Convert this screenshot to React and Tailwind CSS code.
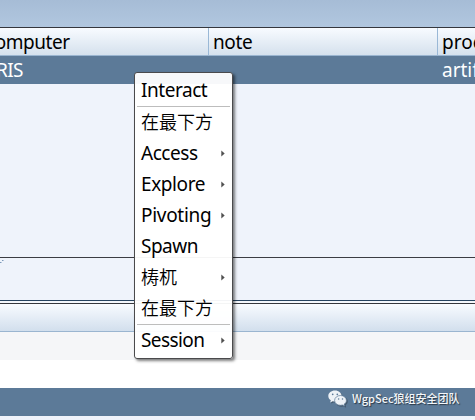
const latin = "font-['Noto_Sans','Noto_Sans_CJK_SC',sans-serif]";
const cjk = "font-['Noto_Sans_CJK_SC',sans-serif]";

const groups = [
  [{ label: 'Interact', tracking: 'tracking-[-0.45px]' }],
  [
    { label: '在最下方', cjk: true },
    { label: 'Access', arrow: true, tracking: 'tracking-[-0.45px]' },
    { label: 'Explore', arrow: true, tracking: 'tracking-[-0.4px]' },
    { label: 'Pivoting', arrow: true, tracking: 'tracking-[-0.3px]' },
    { label: 'Spawn', tracking: 'tracking-[-0.5px]' },
    { label: '梼杌', cjk: true, arrow: true },
    { label: '在最下方', cjk: true },
  ],
  [{ label: 'Session', arrow: true, tracking: 'tracking-[-0.6px]' }],
];

function MenuItem({ item }) {
  return (
    <div className="flex h-[31px] items-center justify-between pl-[6px] pr-[7px]">
      <span className={item.cjk ? `${cjk} pb-[2px] text-[18px] font-[350] leading-[29px]` : `${latin} text-[19px] leading-[31px] ${item.tracking}`}>
        {item.label}
      </span>
      {item.arrow && (
        <svg width="4" height="7" viewBox="0 0 4 7" className="shrink-0">
          <path d="M0.3 0.5 L3.7 3.5 L0.3 6.5 Z" fill="#505050" />
        </svg>
      )}
    </div>
  );
}

function ContextMenu() {
  return (
    <div className="absolute left-[134px] top-[72px] h-[287px] w-[99px] rounded-[3px] border border-[#4a4a4c] bg-white/95 pt-[2px] text-black shadow-[2px_2px_3px_rgba(0,0,0,0.5)]">
      {groups.map((items, i) => (
        <div key={i}>
          {i > 0 && <div className="mx-[2px] h-px bg-[#bdbdbd]" />}
          {items.map((item, j) => (
            <MenuItem key={j} item={item} />
          ))}
        </div>
      ))}
    </div>
  );
}

function WeChatIcon() {
  return (
    <svg width="19" height="17" viewBox="0 0 19 17" className="shrink-0 drop-shadow-[1px_1px_0px_rgba(40,50,60,0.5)]">
      <path d="M7 .5C3.2.5.3 2.9.3 6c0 1.800 1 3.300 2.500 4.300L2.200 12.500l2.500-1.300c.8.200 1.500.3 2.300.3C10.800 11.500 13.700 9 13.700 6S10.800.5 7 .5Z" fill="#eef2f7" />
      <path d="M12.500 5.500c-3.300 0-5.900 2.200-5.900 4.900s2.600 4.900 5.900 4.900c.7 0 1.300-.1 1.900-.3l2.200 1.200-.5-2c1.400-.9 2.300-2.200 2.300-3.800 0-2.700-2.600-4.900-5.900-4.900Z" fill="#eef2f7" stroke="#5c7a98" strokeWidth=".7" />
      <circle cx="4.700" cy="4.300" r=".85" fill="#5c7a98" />
      <circle cx="9.300" cy="4.300" r=".85" fill="#5c7a98" />
      <circle cx="10.600" cy="9" r=".75" fill="#5c7a98" />
      <circle cx="14.500" cy="9" r=".75" fill="#5c7a98" />
    </svg>
  );
}

export default function App() {
  return (
    <div className={`relative flex h-[420px] w-[475px] flex-col overflow-hidden bg-[#eff3fb] text-[19px] text-black ${latin}`}>
      <div className="h-[28px] shrink-0 border-b border-[#35373d] bg-linear-to-b from-[#a6bcd6] to-[#b1c7df]" />

      <div className="flex h-[28px] shrink-0 border-b border-[#9ab5d0] bg-linear-to-b from-[#f8fbff] to-[#d5e1ed] leading-[29px]">
        <div className="w-[209px] shrink-0 border-r border-[#9ab8d6]">
          <span className="ml-[-14px] tracking-[-0.45px]">computer</span>
        </div>
        <div className="w-[229px] shrink-0 border-r border-[#9ab8d6] pl-[4px] tracking-[-0.4px]">note</div>
        <div className="shrink-0 pl-[4px]">process</div>
      </div>

      <div className="flex h-[28px] shrink-0 bg-[#5c7a98] leading-[29px] text-white">
        <div className="w-[438px] shrink-0">
          <span className="ml-[-4px] tracking-[-0.6px]">RIS</span>
        </div>
        <div className="shrink-0 pl-[4px]">artifact</div>
      </div>

      <div className="h-[174px] shrink-0 border-b border-[#3b3c43]" />
      <div className="h-[43px] shrink-0 border-b border-[#26435f]">
        <svg width="4" height="5" viewBox="0 0 4 5" className="block">
          <path d="M0 4.500H1.500M2 2.500H3.500" stroke="#7e9bbb" />
        </svg>
      </div>
      <div className="h-[3px] shrink-0 border-b border-[#35373d] bg-[#f3f6fb]" />
      <div className="h-[28px] shrink-0 border-b border-[#9ab5d0] bg-linear-to-b from-[#f8fbff] to-[#d2dfed]" />
      <div className="h-[28px] shrink-0 bg-[#f5f6f8]" />
      <div className="h-[28px] shrink-0 bg-white" />
      <div className="flex h-[28px] shrink-0 items-start bg-[#5c7a98] pl-[328px] pt-[2px]">
        <WeChatIcon />
        <span className={`${cjk} ml-[5px] whitespace-nowrap text-[11px] font-medium leading-[16px] text-[#f4f7fa] [text-shadow:1px_1px_1px_rgba(30,40,50,0.8)]`}>
          WgpSec狼组安全团队
        </span>
      </div>

      <ContextMenu />
    </div>
  );
}
